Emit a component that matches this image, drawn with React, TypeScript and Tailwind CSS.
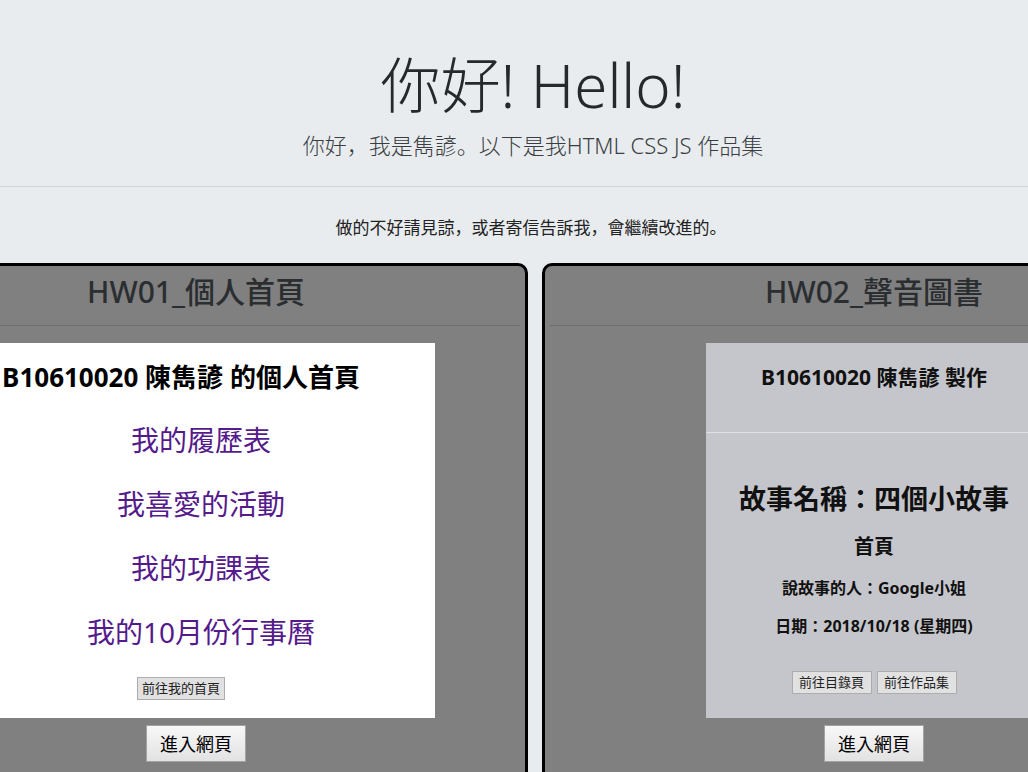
import type { ReactNode } from 'react'

const font = { fontFamily: '"Noto Sans", "Noto Sans CJK JP", sans-serif' }

function EnterButton() {
  return (
    <button className="mt-[7px] w-[100px] h-[37px] mx-auto block border border-[#a3a3a3] bg-linear-to-b from-[#f8f8f8] to-[#e2e2e2] text-[18px] text-black leading-none">
      進入網頁
    </button>
  )
}

function SmallButton({ children, w }: { children: ReactNode; w: string }) {
  return (
    <button className={`${w} h-[23px] border border-[#adadad] bg-[#e1e1e1] text-[13px] text-[#222] leading-none`}>
      {children}
    </button>
  )
}

function Card({ title, children }: { title: string; children: ReactNode }) {
  return (
    <div className="w-[664px] h-[560px] shrink-0 border-[3px] border-black rounded-[10px] bg-[#808080]">
      <div className="pt-[7px] pb-[15px] text-center">
        <h3 className="text-[30px] leading-[37px] font-medium text-[#2b2e31]">{title}</h3>
      </div>
      <div className="mx-[5px] h-px bg-[#6e6e6e]" />
      <div className="mt-[17px]">{children}</div>
      <EnterButton />
    </div>
  )
}

function HomePreview() {
  const links = ['我的履歷表', '我喜愛的活動', '我的功課表', '我的10月份行事曆']
  return (
    <div className="mx-auto w-[478px] h-[375px] bg-white pr-[30px] pt-[14px] text-center">
      <h1 className="text-[26px] leading-[40px] font-bold text-black whitespace-nowrap">B10610020 陳雋諺 的個人首頁</h1>
      <ul className="pl-[40px] mt-[23px] flex flex-col gap-[24px]">
        {links.map(l => (
          <li key={l} className="text-[28px] leading-[40px] text-[#551a8b]">{l}</li>
        ))}
      </ul>
      <div className="mt-[25px] flex justify-center">
        <SmallButton w="w-[88px]">前往我的首頁</SmallButton>
      </div>
    </div>
  )
}

function BookPreview() {
  return (
    <div className="mx-auto w-[336px] h-[375px] bg-[#c5c6cb] text-center text-[#111] font-bold">
      <div className="h-[90px] pt-[19px] border-b border-[#dfe0e3]">
        <p className="text-[21px] leading-[30px] whitespace-nowrap">B10610020 陳雋諺 製作</p>
      </div>
      <p className="mt-[48px] text-[27px] leading-[36px] whitespace-nowrap">故事名稱：四個小故事</p>
      <p className="mt-[16px] text-[20px] leading-[28px]">首頁</p>
      <p className="mt-[15px] text-[16px] leading-[24px]">說故事的人：Google小姐</p>
      <p className="mt-[14px] text-[16px] leading-[24px] whitespace-nowrap">日期：2018/10/18 (星期四)</p>
      <div className="mt-[33px] flex justify-center gap-[5px] font-normal">
        <SmallButton w="w-[80px]">前往目錄頁</SmallButton>
        <SmallButton w="w-[80px]">前往作品集</SmallButton>
      </div>
    </div>
  )
}

export default function App() {
  return (
    <div className="w-full h-screen overflow-hidden bg-[#e9ecef] text-[#212529]" style={font}>
      <header className="pt-12 pl-[38px] text-center">
        <h1 className="text-[60px] leading-[74px] font-light text-[#26292c]">你好! Hello!</h1>
        <p className="mt-[7px] text-[22px] leading-[33px] font-light text-[#3a3e42]">你好，我是雋諺。以下是我HTML CSS JS 作品集</p>
      </header>
      <hr className="mt-[24px] border-0 h-px bg-[#d2d5d8]" />
      <p className="mt-[28px] pl-[34px] text-center text-[17px] leading-[26px] text-[#222]">做的不好請見諒，或者寄信告訴我，會繼續改進的。</p>
      <div className="mt-[22px] flex gap-[14px] -ml-[136px]">
        <Card title="HW01_個人首頁">
          <HomePreview />
        </Card>
        <Card title="HW02_聲音圖書">
          <BookPreview />
        </Card>
      </div>
    </div>
  )
}
